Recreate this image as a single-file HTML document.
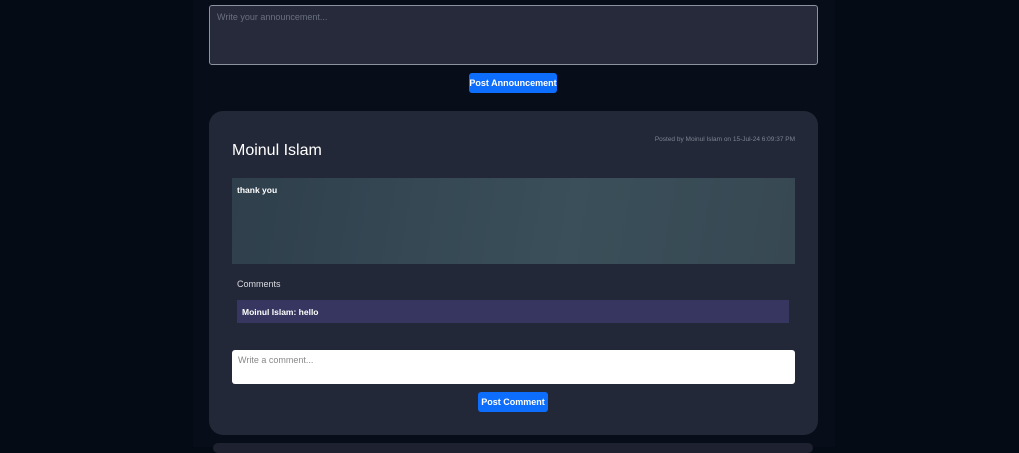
<!DOCTYPE html>
<html><head><style>
*{box-sizing:border-box;margin:0;padding:0}
body{width:1019px;height:447px;overflow:hidden;background:#050b14;font-family:"Liberation Sans",sans-serif;position:relative}
.col{position:absolute;left:193px;top:0;width:642px;height:447px;background:#070d19}
.ta1{position:absolute;left:209px;top:5px;width:609px;height:60px;background:#262a3a;border:1px solid #8c92a0;border-radius:3px;color:#6b7080;font-size:9px;padding:6px 7px}
.btn{position:absolute;background:#0d6efd;color:#fff;font-size:9px;font-weight:bold;border-radius:3px;text-align:center}
.card{position:absolute;left:209px;top:111px;width:609px;height:324px;background:#232838;border-radius:14px}
.card2{position:absolute;left:213px;top:443px;width:600px;height:10px;background:#1d2130;border-radius:10px}
</style></head><body>
<div class="col"></div>
<div class="ta1">Write your announcement...</div>
<div class="btn" style="left:469px;top:73px;width:88px;height:20px;line-height:20px">Post Announcement</div>
<div class="card">
 <div style="position:absolute;left:23px;top:31px;color:#fff;font-size:16px">Moinul Islam</div>
 <div style="position:absolute;right:23px;top:25px;color:#7d8290;font-size:6.5px">Posted by Moinul Islam on 15-Jul-24 6:09:37 PM</div>
 <div style="position:absolute;left:23px;top:67px;width:563px;height:86px;background:linear-gradient(100deg,#2f3f4c,#3a4f5a 60%,#374852);color:#fff;font-size:8.5px;font-weight:bold;padding:7px 5px">thank you</div>
 <div style="position:absolute;left:28px;top:168px;color:#d8dae0;font-size:9px">Comments</div>
 <div style="position:absolute;left:28px;top:189px;width:552px;height:23px;background:#363660;color:#fff;font-size:8.5px;font-weight:bold;padding:7px 5px">Moinul Islam: hello</div>
 <div style="position:absolute;left:23px;top:239px;width:563px;height:34px;background:#fff;border-radius:3px;color:#888;font-size:9px;padding:5px 6px">Write a comment...</div>
 <div class="btn" style="left:269px;top:281px;width:70px;height:20px;line-height:20px">Post Comment</div>
</div>
<div class="card2"></div>
</body></html>
